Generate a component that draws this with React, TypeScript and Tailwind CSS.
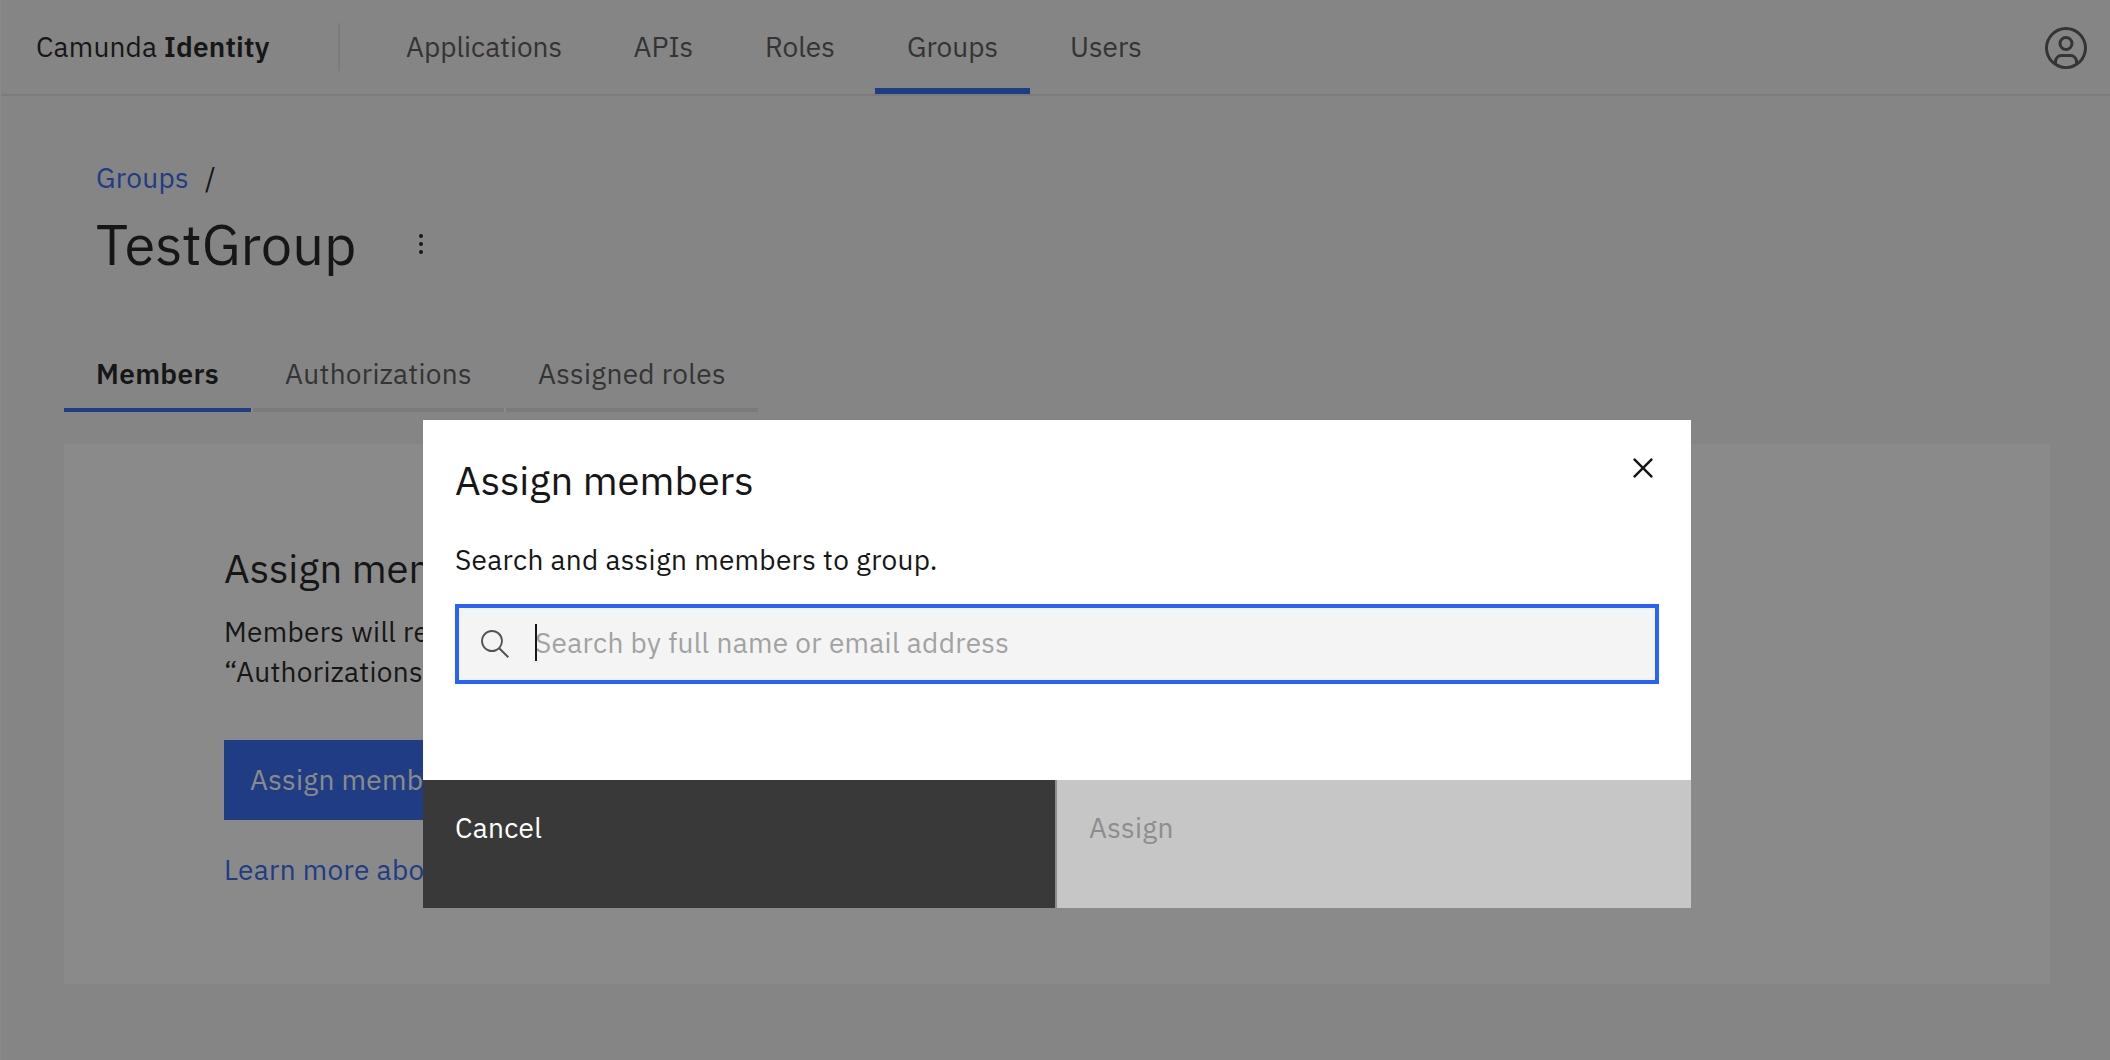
import type { ReactNode } from 'react'

type NavItem = { label: string; width: string; active?: boolean }

const NAV: NavItem[] = [
  { label: 'Applications', width: 'w-[219.5px]' },
  { label: 'APIs', width: 'w-[123.5px]' },
  { label: 'Roles', width: 'w-[134px]' },
  { label: 'Groups', width: 'w-[155px]', active: true },
  { label: 'Users', width: 'w-[134px]' },
]

const TABS: NavItem[] = [
  { label: 'Members', width: 'w-[187px]', active: true },
  { label: 'Authorizations', width: 'w-[251px]' },
  { label: 'Assigned roles', width: 'w-[252px]' },
]

function UserAvatarIcon() {
  return (
    <svg viewBox="0 0 32 32" className="size-12 fill-[#525252]">
      <path d="M16,8a5,5,0,1,0,5,5A5,5,0,0,0,16,8Zm0,8a3,3,0,1,1,3-3A3.0034,3.0034,0,0,1,16,16Z" />
      <path d="M16,2A14,14,0,1,0,30,16,14.0158,14.0158,0,0,0,16,2ZM10,26.3765V25a3.0033,3.0033,0,0,1,3-3h6a3.0033,3.0033,0,0,1,3,3v1.3765a11.8989,11.8989,0,0,1-12,0Zm13.9925-1.4507A5.0016,5.0016,0,0,0,19,20H13a5.0016,5.0016,0,0,0-4.9925,4.9258,12,12,0,1,1,15.985,0Z" />
    </svg>
  )
}

function OverflowIcon() {
  return (
    <svg viewBox="0 0 32 32" className="size-8 fill-[#161616]">
      <circle cx="16" cy="8" r="2" />
      <circle cx="16" cy="16" r="2" />
      <circle cx="16" cy="24" r="2" />
    </svg>
  )
}

function SearchIcon() {
  return (
    <svg viewBox="0 0 16 16" className="size-8 fill-[#525252]">
      <path d="M15,14.3L10.7,10c1.9-2.3,1.6-5.8-0.7-7.7S4.2,0.7,2.3,3S0.7,8.8,3,10.7c2,1.7,5,1.7,7,0l4.3,4.3L15,14.3z M2,6.5C2,4,4,2,6.5,2S11,4,11,6.5S9,11,6.5,11S2,9,2,6.5z" />
    </svg>
  )
}

function CloseIcon() {
  return (
    <svg viewBox="0 0 32 32" className="size-10 fill-[#161616]">
      <path d="M24 9.4L22.6 8 16 14.6 9.4 8 8 9.4 14.6 16 8 22.6 9.4 24 16 17.4 22.6 24 24 22.6 17.4 16z" />
    </svg>
  )
}

function Header() {
  return (
    <header className="flex h-24 items-center border-b-2 border-[#e0e0e0] pl-9 tracking-normal text-[#161616]">
      <div className="w-[302px] tracking-[0.2px]">
        Camunda <span className="font-semibold">Identity</span>
      </div>
      <div className="h-12 w-0.5 bg-[#e0e0e0]" />
      <nav className="ml-[34px] flex h-full gap-2">
        {NAV.map((item) => (
          <a key={item.label} className={`flex flex-col pl-8 text-[#525252] ${item.width}`}>
            <span className="flex flex-1 items-center pt-1.5">{item.label}</span>
            <span className={`-ml-8 h-1.5 ${item.active ? 'bg-[#2862f4]' : ''}`} />
          </a>
        ))}
      </nav>
      <button className="ml-auto mr-5 mt-0.5">
        <UserAvatarIcon />
      </button>
    </header>
  )
}

function Tabs() {
  return (
    <div className="mt-[60px] flex h-[72px]">
      {TABS.map((tab, i) => (
        <div key={tab.label} className="flex items-end">
          <div
            className={`flex h-full flex-col ${tab.width} ${tab.active ? 'font-semibold text-[#161616]' : 'text-[#525252]'}`}
          >
            <span className="flex flex-1 items-center pl-8">{tab.label}</span>
            <span className={`h-1 ${tab.active ? 'bg-[#2862f4]' : 'bg-[#e0e0e0]'}`} />
          </div>
          {i < TABS.length - 1 && <span className="h-1 w-0.5 bg-white" />}
        </div>
      ))}
    </div>
  )
}

function GroupPage() {
  return (
    <main className="pt-[62px]">
      <div className="flex h-10 pl-24 leading-10">
        <a className="w-[109px] text-[#2862f4]">Groups</a>
        <span className="text-[#161616]">/</span>
      </div>
      <div className="mt-2.5 flex h-[72px] items-center pl-24">
        <h1 className="w-[309px] text-[56px] leading-[72px] tracking-normal text-[#161616]">TestGroup</h1>
        <button>
          <OverflowIcon />
        </button>
      </div>
      <div className="pl-16 pr-[60px]">
        <Tabs />
        <section className="mt-8 flex h-[540px] flex-col items-start bg-white pl-40 pt-[100px] text-[#161616]">
          <h2 className="text-[40px] leading-[48px] tracking-normal">Assign members</h2>
          <p className="mt-5 leading-10">
            Members will receive the permissions set in
            <br />
            “Authorizations” of this group
          </p>
          <button className="mt-12 flex h-20 w-[300px] items-center bg-[#2862f4] pl-[26px] text-white">
            Assign members
          </button>
          <a className="mt-[30px] leading-10 text-[#2862f4]">Learn more about groups</a>
        </section>
      </div>
    </main>
  )
}

function Modal({ title, children }: { title: string; children: ReactNode }) {
  return (
    <div className="fixed inset-0 flex items-start justify-center bg-[#161616]/50 pl-1 pt-[420px]">
      <div role="dialog" className="relative flex h-[488px] w-[1268px] flex-col bg-white text-[#161616]">
        <button className="absolute right-7 top-7">
          <CloseIcon />
        </button>
        <h3 className="pl-8 pt-9 text-[40px] leading-[48px] tracking-normal">{title}</h3>
        {children}
      </div>
    </div>
  )
}

export default function App() {
  return (
    <div className="relative h-[1060px] w-[2110px] overflow-hidden border-l border-white bg-[#f4f4f4] font-['IBM_Plex_Sans',Roboto,sans-serif] text-[28px] tracking-[0.32px]">
      <div className="-ml-px">
        <Header />
        <GroupPage />
      </div>
      <Modal title="Assign members">
        <p className="mt-9 pl-8 leading-10">Search and assign members to group.</p>
        <div className="mx-8 mt-6 flex h-20 items-center border-4 border-[#2563fa] bg-[#f4f4f4] pl-5">
          <SearchIcon />
          <div className="relative ml-6 flex-1 pb-0.5 leading-10">
            <span className="text-[#a2a2a2]">Search by full name or email address</span>
            <span className="absolute left-0 top-px h-[37px] w-0.5 bg-[#161616]" />
          </div>
        </div>
        <div className="mt-auto flex h-32 leading-10">
          <button className="flex w-[632px] items-start bg-[#393939] pl-8 pt-7 text-white">Cancel</button>
          <div className="w-0.5 bg-[#8d8d8d]" />
          <button className="flex flex-1 items-start bg-[#c6c6c6] pl-8 pt-7 text-[#8d8d8d]">Assign</button>
        </div>
      </Modal>
    </div>
  )
}
